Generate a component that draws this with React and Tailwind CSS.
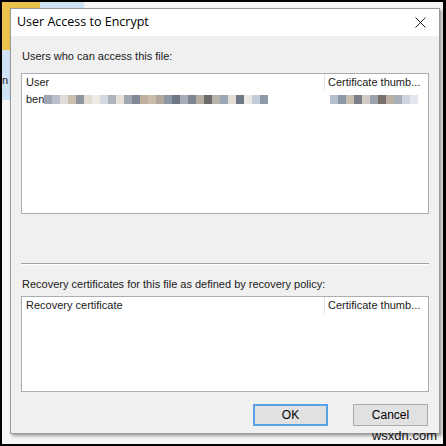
import React from 'react';

const userBlur = [
  'bg-[#9fa9b6]', 'bg-[#b9c0ca]', 'bg-[#e0ddd8]', 'bg-[#cdbfae]', 'bg-[#8e959f]', 'bg-[#e2dcd2]', 'bg-[#eeebe6]',
  'bg-[#d3d9e1]', 'bg-[#aeb4bd]', 'bg-[#e6e1d9]', 'bg-[#9ea7b2]', 'bg-[#7f8894]', 'bg-[#c0b19e]', 'bg-[#c9bdae]',
  'bg-[#b0a89d]', 'bg-[#8c97a6]', 'bg-[#6f7784]', 'bg-[#a5aeb9]', 'bg-[#7d8794]', 'bg-[#b7aea2]', 'bg-[#6d6a6a]',
  'bg-[#b8b3ab]', 'bg-[#9aa6b5]', 'bg-[#e3ddd3]', 'bg-[#6f7886]', 'bg-[#ece9e4]', 'bg-[#c3ccd7]', 'bg-[#8f9aa8]',
];

const certBlur = [
  'bg-[#b4c0cf]', 'bg-[#8d98a8]', 'bg-[#c9bfb1]', 'bg-[#7b7f88]', 'bg-[#d2cdc6]', 'bg-[#9ba3ae]',
  'bg-[#7a6f6a]', 'bg-[#b9b0a3]', 'bg-[#a7aeb8]', 'bg-[#cfd5de]', 'bg-[#e4e8ee]',
];

const Blur = ({ cells }) => (
  <div className="flex h-[9px]">
    {cells.map((c, i) => (
      <div key={i} className={`${c} w-[8px] h-full`} />
    ))}
  </div>
);

const ListBox = ({ first, height, children }) => (
  <div className={`bg-white border border-[#abadb3] ${height}`}>
    <div className="flex h-[17px] items-center">
      <div className="w-[303px] pl-[4px] border-r border-[#e5e5e5] h-full flex items-center">{first}</div>
      <div className="pl-[3px]">Certificate thumb...</div>
    </div>
    {children}
  </div>
);

export default function App() {
  return (
    <div className="w-[446px] h-[446px] bg-black pt-[2px] pl-[2px] pr-[3px] pb-[2px]">
      <div className="relative w-full h-full bg-[#f6f6f6] overflow-hidden" style={{ fontFamily: '"Liberation Sans", Arial, sans-serif' }}>
        {/* desktop behind the dialog */}
        <div className="absolute left-0 top-0 w-[38px] h-[48px] bg-[#e9c14c]" />
        <div className="absolute left-[38px] top-0 w-[44px] h-[8px] bg-[#cfe3f4]" />
        <div className="absolute left-0 top-[48px] w-[8px] h-[50px] bg-[#cfe3f4]" />
        <div className="absolute left-[0px] top-[72px] text-[11px] leading-[12px] text-[#222]">n</div>

        <div className="relative ml-[8px] mt-[6px] w-[430px] h-[426px] border border-[#9a9a9a] bg-[#f0f0f0] shadow-[2px_2px_3px_rgba(0,0,0,0.35)] flex flex-col text-[11px] text-[#1a1a1a]">
          <div className="h-[27px] bg-white flex items-center justify-between pl-[6px] pr-[13px] shrink-0">
            <span className="text-[12.5px] text-black" style={{ fontFamily: '"Open Sans", sans-serif' }}>User Access to Encrypt</span>
            <svg width="11" height="11" viewBox="0 0 11 11" className="text-[#222]">
              <path d="M0.5 0.5L10.5 10.5M10.5 0.5L0.5 10.5" stroke="currentColor" strokeWidth="1" />
            </svg>
          </div>

          <div className="flex flex-col px-[10px] pt-[13px]">
            <div className="pl-[1px] h-[14px] leading-[14px]">Users who can access this file:</div>
            <div className="mt-[10px]">
              <ListBox first="User" height="h-[141px]">
                <div className="flex items-center h-[16px]">
                  <div className="w-[303px] pl-[4px] flex items-center">
                    <span>ben</span>
                    <Blur cells={userBlur} />
                  </div>
                  <div className="pl-[5px]">
                    <Blur cells={certBlur} />
                  </div>
                </div>
              </ListBox>
            </div>

            <div className="mt-[49px] h-[2px] border-t border-[#a0a0a0] border-b border-b-white" />

            <div className="mt-[12px] pl-[1px] h-[14px] leading-[14px]">Recovery certificates for this file as defined by recovery policy:</div>
            <div className="mt-[5px]">
              <ListBox first="Recovery certificate" height="h-[96px]" />
            </div>

            <div className="mt-[12px] flex justify-end gap-[25px] pr-[1px]">
              <button className="w-[75px] h-[22px] bg-[#e1e1e1] border-2 border-[#5aa0e6] text-[12px] text-black">OK</button>
              <button className="w-[75px] h-[22px] bg-[#e1e1e1] border border-[#adadad] text-[12px] text-black">Cancel</button>
            </div>
          </div>
        </div>

        <div className="absolute right-[6px] bottom-[2px] text-[13px] text-[#111] leading-none">wsxdn.com</div>
      </div>
    </div>
  );
}
